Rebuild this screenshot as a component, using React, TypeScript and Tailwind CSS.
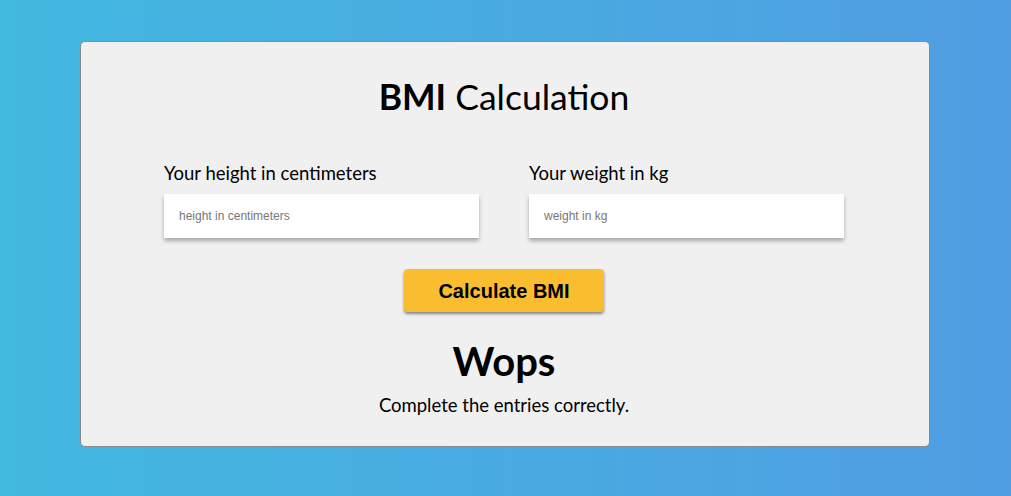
import React, { useState } from 'react';

export default function App() {
  const [height, setHeight] = useState('');
  const [weight, setWeight] = useState('');

  return (
    <div className="min-h-screen w-full bg-[linear-gradient(90deg,#42b9df_0%,#509de2_100%)] pt-[41px]">
      <div className="ml-[80px] w-[850px] h-[406px] rounded-[5px] border border-[#8a8a8a] bg-[#f0f0f0] flex flex-col items-center pr-[2px] font-['Lato',sans-serif] text-black">
        <h1 className="mt-[33px] text-[35.5px] leading-[44px]">
          <span className="font-bold">BMI</span> Calculation
        </h1>

        <div className="mt-[42px] flex gap-[50px]">
          <div className="flex flex-col w-[315px]">
            <label className="text-[18.5px] leading-[24px]">Your height in centimeters</label>
            <input
              value={height}
              onChange={e => setHeight(e.target.value)}
              placeholder="height in centimeters"
              className="mt-[9px] h-[44px] bg-white px-[15px] text-[12px] font-['Liberation_Sans',Arial,sans-serif] outline-none placeholder:text-[#777] shadow-[0_3px_4px_rgba(0,0,0,0.3)]"
            />
          </div>
          <div className="flex flex-col w-[315px]">
            <label className="text-[18.5px] leading-[24px]">Your weight in kg</label>
            <input
              value={weight}
              onChange={e => setWeight(e.target.value)}
              placeholder="weight in kg"
              className="mt-[9px] h-[44px] bg-white px-[15px] text-[12px] font-['Liberation_Sans',Arial,sans-serif] outline-none placeholder:text-[#777] shadow-[0_3px_4px_rgba(0,0,0,0.3)]"
            />
          </div>
        </div>

        <button className="mt-[31px] w-[200px] h-[43px] rounded-[4px] bg-[#fbbd30] font-['Liberation_Sans',Arial,sans-serif] font-bold text-[20px] text-black shadow-[0_2px_3px_rgba(0,0,0,0.45)]">
          Calculate BMI
        </button>

        <h2 className="mt-[25px] text-[40px] leading-[48px] font-bold">Wops</h2>
        <p className="mt-[8px] text-[18.5px] leading-[24px]">Complete the entries correctly.</p>
      </div>
    </div>
  );
}
